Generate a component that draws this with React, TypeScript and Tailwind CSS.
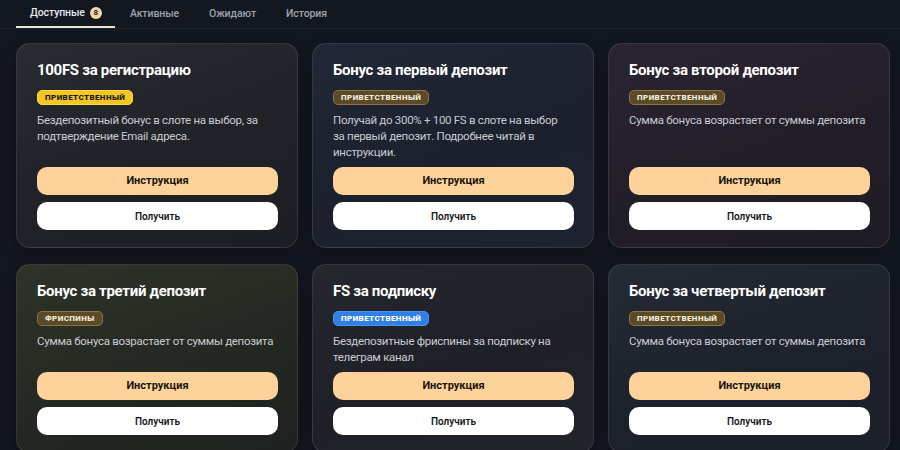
import React from 'react';

type Badge = 'yellow' | 'brown' | 'blue';

type Bonus = {
  title: string;
  badge: string;
  tone: Badge;
  text: string;
  bg: string;
};

const bonuses: Bonus[] = [
  {
    title: '100FS за регистрацию',
    badge: 'Приветственный',
    tone: 'yellow',
    text: 'Бездепозитный бонус в слоте на выбор, за подтверждение Email адреса.',
    bg: 'bg-[linear-gradient(160deg,#2a2b31_0%,#202228_55%,#1c1e24_100%)]',
  },
  {
    title: 'Бонус за первый депозит',
    badge: 'Приветственный',
    tone: 'brown',
    text: 'Получай до 300% + 100 FS в слоте на выбор за первый депозит. Подробнее читай в инструкции.',
    bg: 'bg-[linear-gradient(160deg,#222837_0%,#1b202c_55%,#1e2330_100%)]',
  },
  {
    title: 'Бонус за второй депозит',
    badge: 'Приветственный',
    tone: 'brown',
    text: 'Сумма бонуса возрастает от суммы депозита',
    bg: 'bg-[linear-gradient(160deg,#2b2532_0%,#221e28_55%,#1e1c24_100%)]',
  },
  {
    title: 'Бонус за третий депозит',
    badge: 'Фриспины',
    tone: 'brown',
    text: 'Сумма бонуса возрастает от суммы депозита',
    bg: 'bg-[linear-gradient(160deg,#2e3329_0%,#242822_55%,#1e211f_100%)]',
  },
  {
    title: 'FS за подписку',
    badge: 'Приветственный',
    tone: 'blue',
    text: 'Бездепозитные фриспины за подписку на телеграм канал',
    bg: 'bg-[linear-gradient(160deg,#26272e_0%,#1f2027_55%,#23242b_100%)]',
  },
  {
    title: 'Бонус за четвертый депозит',
    badge: 'Приветственный',
    tone: 'brown',
    text: 'Сумма бонуса возрастает от суммы депозита',
    bg: 'bg-[linear-gradient(160deg,#252a35_0%,#1d212b_55%,#1c202a_100%)]',
  },
];

const badgeClass: Record<Badge, string> = {
  yellow: 'bg-[#f3c623] text-[#1a1a1a] border-[#f8d84a]',
  brown: 'bg-[#5b4a27] text-[#f1ead8] border-[#8a7443]',
  blue: 'bg-[#2f7fe6] text-white border-[#4b94f0]',
};

const tabs = ['Активные', 'Ожидают', 'История'];

export default function App() {
  return (
    <div
      className="w-[900px] h-[450px] overflow-hidden bg-[#131720] text-white"
      style={{ fontFamily: 'Roboto, "Noto Sans", sans-serif' }}
    >
      <div className="flex items-end border-b border-white/5 pl-4 h-[29px]">
        <div className="flex items-center gap-[5px] pl-[14px] pr-[13px] h-full border-b-2 border-[#ece4d4]">
          <span className="text-[10.5px] font-medium tracking-[-0.1px] text-[#e6e7ea]">Доступные</span>
          <span className="w-3 h-3 rounded-full bg-[#ecd6ac] text-[#2a2317] text-[8px] font-bold flex items-center justify-center">
            8
          </span>
        </div>
        <div className="flex items-center gap-[30px] pl-[15px] h-full">
          {tabs.map(t => (
            <span key={t} className="text-[10.5px] font-medium tracking-[-0.1px] text-[#9ea3ad]">{t}</span>
          ))}
        </div>
      </div>

      <div className="grid grid-cols-3 gap-x-[14px] gap-y-4 pl-4 pr-[10px] pt-[14px]">
        {bonuses.map(b => (
          <div
            key={b.title}
            className={`${b.bg} flex flex-col rounded-[14px] border border-white/10 pl-[20px] pr-[19px] pt-[16px] pb-[17px] shadow-[0_6px_16px_rgba(0,0,0,0.35)]`}
          >
            <h3 className="text-[15px] leading-[20px] font-bold tracking-[-0.3px] text-white">{b.title}</h3>
            <div className="mt-[10px] flex">
              <span
                className={`${badgeClass[b.tone]} h-[15px] px-[7px] rounded-[5px] border text-[8px] font-black uppercase tracking-[0.4px] flex items-center`}
              >
                {b.badge}
              </span>
            </div>
            <p className="mt-[7px] pr-[4px] text-[11.5px] leading-[16px] tracking-[-0.3px] text-[#c8cbd2]">{b.text}</p>
            <div className="mt-auto pt-[7px] flex flex-col gap-[7px]">
              <button className="h-[28px] rounded-[10px] bg-[#fdd39b] text-[#1b1610] text-[11px] font-bold">
                Инструкция
              </button>
              <button className="h-[28px] rounded-[10px] bg-white text-[#15171c] text-[10px] font-semibold">
                Получить
              </button>
            </div>
          </div>
        ))}
      </div>
    </div>
  );
}
